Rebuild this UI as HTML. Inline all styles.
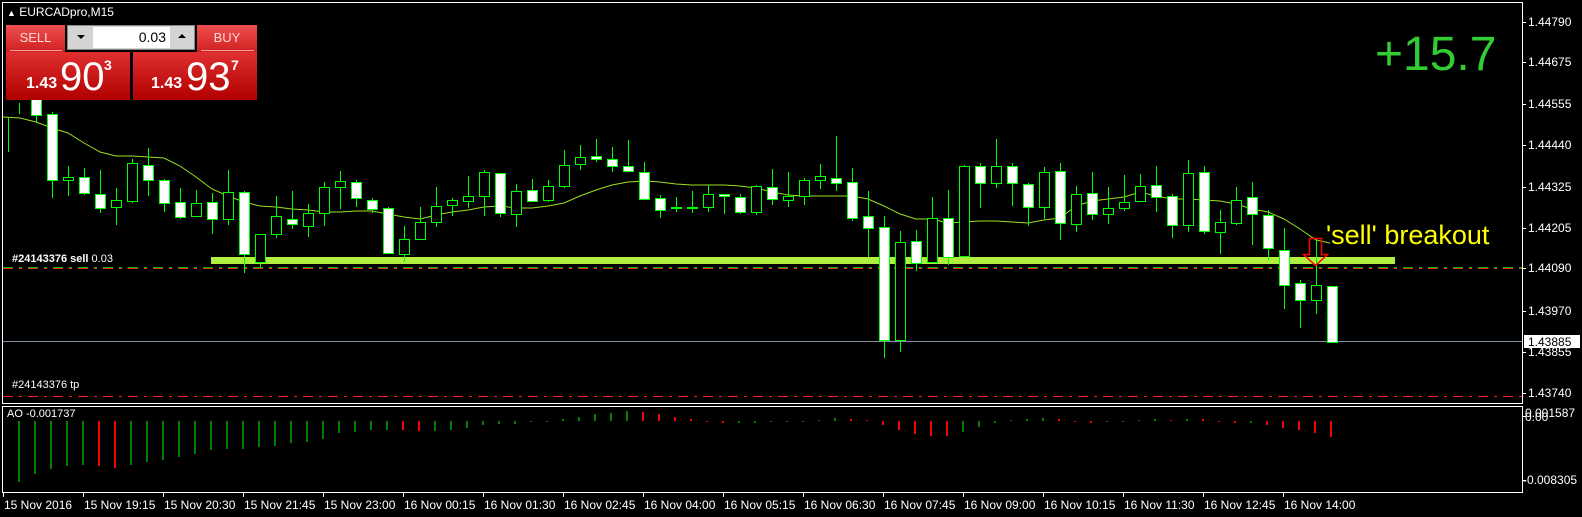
<!DOCTYPE html>
<html><head><meta charset="utf-8"><style>
html,body{margin:0;padding:0;background:#000;width:1582px;height:517px;overflow:hidden;font-family:"Liberation Sans",sans-serif}
svg{position:absolute;left:0;top:0}
.t{position:absolute;white-space:nowrap}
.btn{position:absolute;background:linear-gradient(#f05050,#d02020);color:#ffd8d8;font-size:13px;text-align:center}
.big{position:absolute;background:linear-gradient(#e03030,#b00000);color:#fff}
</style></head><body>
<svg id="s" width="1582" height="517" xmlns="http://www.w3.org/2000/svg" font-family="Liberation Sans, sans-serif"></svg>
<div class="t" style="left:7px;top:5px;color:#fff;font-size:12px"><span style="font-size:9px">&#9650;</span> EURCADpro,M15</div>
<div class="btn" style="left:6px;top:25px;width:59px;height:27px;line-height:26px">SELL<div style="position:absolute;left:4px;right:3px;top:25px;height:1px;background:#f0a0a0"></div></div>
<div class="btn" style="left:197px;top:25px;width:60px;height:27px;line-height:26px">BUY<div style="position:absolute;left:4px;right:3px;top:25px;height:1px;background:#f0a0a0"></div></div>
<div style="position:absolute;left:67px;top:25px;width:128px;height:25px;background:#d4d4d4;border:1px solid #888;box-sizing:border-box">
 <div style="position:absolute;left:25px;top:1px;width:77px;height:21px;background:#fff;font-size:14px;text-align:right;line-height:21px;color:#000;padding-right:4px;box-sizing:border-box">0.03</div>
 <div style="position:absolute;left:9px;top:9px;width:0;height:0;border-left:4px solid transparent;border-right:4px solid transparent;border-top:4px solid #000"></div>
 <div style="position:absolute;left:110px;top:8px;width:0;height:0;border-left:4px solid transparent;border-right:4px solid transparent;border-bottom:4px solid #000"></div>
</div>
<div class="big" style="left:6px;top:52px;width:124px;height:48px">
 <span class="t" style="left:20px;top:23px;font-size:16px;font-weight:bold">1.43</span>
 <span class="t" style="left:54px;top:3px;font-size:40px">90</span>
 <span class="t" style="left:98px;top:5px;font-size:14px;font-weight:bold">3</span>
</div>
<div class="big" style="left:133px;top:52px;width:124px;height:48px">
 <span class="t" style="left:18px;top:23px;font-size:16px;font-weight:bold">1.43</span>
 <span class="t" style="left:53px;top:3px;font-size:40px">93</span>
 <span class="t" style="left:98px;top:5px;font-size:14px;font-weight:bold">7</span>
</div>
<div class="t" style="left:1375px;top:27px;color:#32cd32;font-size:48px">+15.7</div>
<div class="t" style="left:1326px;top:222px;color:#ffff00;font-size:27px;line-height:27px">'sell' breakout</div>
<div class="t" style="left:12px;top:253px;color:#fff;font-size:11px"><b>#24143376 sell</b> 0.03</div>
<div class="t" style="left:12px;top:379px;color:#fff;font-size:11px">#24143376 tp</div>
<div class="t" style="left:7px;top:408px;color:#fff;font-size:11px">AO -0.001737</div>
<script>
var s=document.getElementById('s'),h='';
function L(x1,y1,x2,y2,c,w,d){h+='<line x1="'+x1+'" y1="'+y1+'" x2="'+x2+'" y2="'+y2+'" stroke="'+c+'" stroke-width="'+(w||1)+'"'+(d?' stroke-dasharray="'+d+'"':'')+'/>';}
function T(x,y,t,c,sz){h+='<text x="'+x+'" y="'+y+'" fill="'+(c||'#fff')+'" font-size="'+(sz||12)+'">'+t+'</text>';}
h+='<rect x="2.5" y="2.5" width="1520" height="401" fill="none" stroke="#fff"/>';
h+='<rect x="2.5" y="406.5" width="1520" height="86" fill="none" stroke="#fff"/>';
h+='<rect x="211" y="257" width="1184" height="7" fill="#b0f040"/>';
L(3,267.5,1522,267.5,'#00c000',1,'10 6 3 6');
L(3,268.5,1522,268.5,'#ff2020',1,'10 6 3 6');
L(3,396.5,1522,396.5,'#ff2020',1,'10 6 3 6');
L(3,341.5,1522,341.5,'#8090a0',1);
var ma=[[3,117],[20,118],[36,122],[52,128],[68,133],[84,143],[100,152],[116,156],[132,156],[148,157],[164,158],[180,166],[196,177],[212,189],[228,196],[244,202],[260,206],[276,207],[292,209],[308,210],[324,212],[340,212],[356,211],[372,211],[388,214],[404,217],[420,219],[436,215],[452,212],[468,210],[484,207],[500,206],[516,208],[532,208],[548,206],[564,203],[580,196],[596,190],[612,185],[628,182],[644,181],[660,182],[676,184],[692,185],[708,185],[724,185],[740,186],[756,188],[772,192],[788,195],[804,196],[820,196],[836,196],[852,196],[868,199],[884,206],[900,214],[916,219],[932,219],[948,223],[964,222],[980,221],[996,221],[1012,222],[1028,223],[1044,220],[1060,218],[1076,206],[1092,201],[1108,199],[1124,197],[1140,192],[1156,196],[1172,199],[1188,199],[1204,200],[1220,201],[1236,204],[1252,209],[1268,212],[1284,219],[1300,229],[1316,240],[1330,243]];
h+='<polyline fill="none" stroke="#9ce020" stroke-width="1" points="'+ma.map(function(p){return p.join(',')}).join(' ')+'"/>';
var c=[[0,96,115,96,123,1],[1,114,180,112,198,1],[2,177,180,166,196,0],[3,177,193,168,195,1],[4,194,208,170,213,1],[5,200,207,188,225,0],[6,163,201,159,203,0],[7,165,180,148,196,1],[8,180,203,179,212,1],[9,202,217,188,219,1],[10,203,216,190,216,0],[11,202,219,193,234,1],[12,192,219,170,225,0],[13,192,254,191,273,1],[14,234,262,234,268,0],[15,216,234,196,238,0],[16,219,224,191,229,1],[17,213,226,204,237,0],[18,187,213,182,226,0],[19,181,187,171,209,0],[20,182,198,180,207,1],[21,200,209,198,213,1],[22,208,253,207,254,1],[23,239,254,226,262,0],[24,222,239,207,240,0],[25,206,222,187,227,0],[26,200,205,198,216,0],[27,196,201,176,208,0],[28,172,196,170,216,0],[29,173,213,173,217,1],[30,191,214,184,227,0],[31,190,201,179,201,1],[32,186,200,180,202,0],[33,165,186,150,188,0],[34,157,164,145,170,0],[35,156,159,139,162,1],[36,159,166,147,172,1],[37,166,171,140,172,1],[38,172,199,162,199,1],[39,198,210,195,218,1],[40,207,208,197,212,0],[41,207,208,191,213,0],[42,194,207,185,212,0],[43,194,196,194,214,1],[44,197,212,194,214,1],[45,186,212,185,215,0],[46,187,199,169,205,1],[47,196,200,172,207,0],[48,180,196,178,205,0],[49,176,180,164,189,0],[50,178,183,136,191,1],[51,182,218,168,221,1],[52,216,228,191,257,1],[53,227,340,216,358,1],[54,242,340,231,352,0],[55,241,263,230,271,1],[56,218,262,197,262,0],[57,218,257,190,265,1],[58,166,256,165,256,0],[59,166,183,163,208,1],[60,166,183,139,188,0],[61,166,183,163,206,1],[62,184,207,183,226,1],[63,172,207,167,219,0],[64,171,223,163,240,1],[65,194,224,186,232,0],[66,193,214,172,220,1],[67,208,214,187,224,0],[68,202,208,175,211,0],[69,186,201,174,201,0],[70,185,197,166,212,1],[71,196,225,194,238,1],[72,173,225,160,232,0],[73,172,231,166,234,1],[74,222,232,210,254,0],[75,200,223,187,225,0],[76,197,214,182,245,1],[77,215,248,210,260,1],[78,250,285,228,309,1],[79,283,300,280,328,1],[80,285,300,238,314,0],[81,286,342,286,343,1]];
L(19.5,103,19.5,114,'#00ff00');L(8.5,117,8.5,152,'#00ff00');
c.forEach(function(k){var x=36+16*k[0];L(x+0.5,k[3],x+0.5,k[4],'#00ff00');
 h+='<rect x="'+(x-4.5)+'" y="'+(k[1]+0.5)+'" width="10" height="'+Math.max(1,k[2]-k[1])+'" fill="'+(k[5]?'#fff':'#000')+'" stroke="#00ff00" stroke-width="1"/>';});
h+='<path d="M1309.5,238.5 H1321.5 V254.5 H1327.5 L1315.5,265.5 L1303.5,254.5 H1309.5 Z" fill="none" stroke="#ff0000" stroke-width="1.5"/>';
var ao=[482,474,469,466,465,466,468,465,462,460,457,454,450,449,449,447,446,443,442,439,433,432,430,430,430,431,431,430,428,425,424,424,422,422,419,417,414,413,411,412,414,417,419,422,423,423,423,422,422,422,420,418,419,420,425,430,434,436,436,432,427,423,420,419,418,419,422,423,422,422,420,419,420,419,419,422,423,423,425,428,430,433,437];
var red={5:1,6:1,24:1,25:1,39:1,40:1,41:1,42:1,43:1,44:1,52:1,53:1,54:1,55:1,56:1,57:1,58:1,65:1,66:1,67:1,72:1,74:1,75:1,76:1,78:1,79:1,80:1,81:1,82:1};
ao.forEach(function(y,k){var x=18+16*k;h+='<rect x="'+x+'" y="'+Math.min(y,421)+'" width="2" height="'+Math.max(1,Math.abs(y-421))+'" fill="'+(red[k]?'#ff0000':'#008000')+'"/>';});
var pl=[['1.44790',22],['1.44675',62],['1.44555',104],['1.44440',145],['1.44325',187],['1.44205',228],['1.44090',268],['1.43970',311],['1.43855',352],['1.43740',393]];
pl.forEach(function(p){L(1523,p[1]+0.5,1526,p[1]+0.5,'#fff');T(1528,p[1]+4,p[0],'#fff',12);});
h+='<rect x="1524" y="335" width="56" height="13" fill="#fff"/>';T(1528,346,'1.43885','#000',12);
L(1523,416.5,1526,416.5,'#fff');T(1525,417,'0.001587','#fff',12);T(1525,421,'0.00','#fff',12);
L(1523,480.5,1526,480.5,'#fff');T(1523,484,'-0.008305','#fff',12);
var tl=['15 Nov 2016','15 Nov 19:15','15 Nov 20:30','15 Nov 21:45','15 Nov 23:00','16 Nov 00:15','16 Nov 01:30','16 Nov 02:45','16 Nov 04:00','16 Nov 05:15','16 Nov 06:30','16 Nov 07:45','16 Nov 09:00','16 Nov 10:15','16 Nov 11:30','16 Nov 12:45','16 Nov 14:00'];
tl.forEach(function(t,i){var x=3+80*i;L(x+0.5,493,x+0.5,497,'#fff');T(x+1,509,t,'#fff',12);});
s.innerHTML=h;
</script>
</body></html>
